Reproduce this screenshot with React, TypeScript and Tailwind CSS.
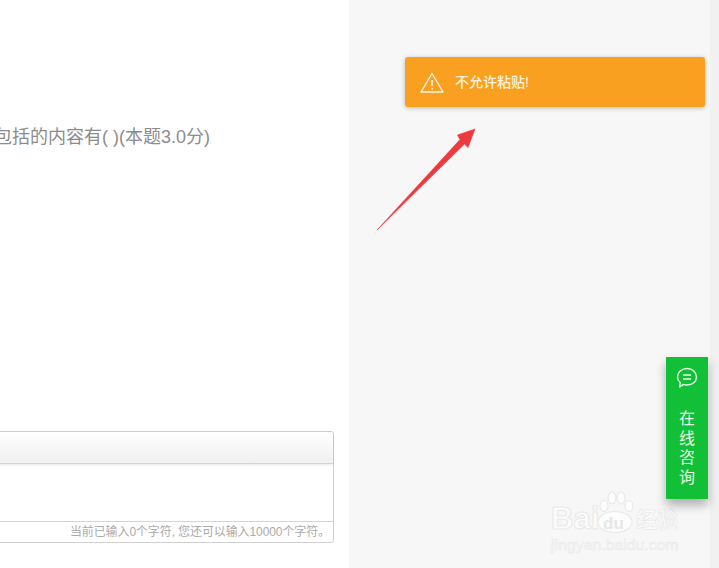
import React from 'react';

const cjk = "font-['Liberation_Sans','Noto_Sans_CJK_SC',sans-serif]";

const Editor: React.FC = () => {
  return (
    <div className="editor ml-[-20px] mr-[15px] mt-auto mb-[25px] flex h-[112px] flex-col rounded-[3px] border border-[#cfcfcf] bg-white">
      <div className="h-[32px] rounded-t-[3px] border-b border-[#d4d4d4] bg-gradient-to-b from-white to-[#f0f0f0] shadow-[0_1px_3px_rgba(0,0,0,0.1)]"></div>
      <div className="flex-1"></div>
      <div className="flex h-[21px] items-center justify-end border-t border-[#d4d4d4] pr-[3px] text-[12px] tracking-[-0.1px] text-[#ababab]">
        当前已输入0个字符, 您还可以输入10000个字符。
      </div>
    </div>
  );
};

const Alert: React.FC = () => {
  return (
    <div className="alert flex h-[50px] w-[300px] items-center rounded-[3px] bg-[#f9a020] pl-[15px] shadow-[0_1px_5px_rgba(0,0,0,0.25)]">
      <svg width="24" height="21" viewBox="0 0 24 21" fill="none" stroke="#fff5e0" strokeWidth="1.4">
        <path d="M12 1.5 L23 20 L1 20 Z" strokeLinejoin="round" />
        <path d="M12 8 L12 14" strokeWidth="1.6" />
        <circle cx="12" cy="16.8" r="1" fill="#fff5e0" stroke="none" />
      </svg>
      <span className="ml-[11px] text-[14px] font-medium text-[#fff3dc]">不允许粘贴!</span>
    </div>
  );
};

const Consult: React.FC = () => {
  return (
    <div className="absolute left-[666px] top-[357px] flex h-[142px] w-[42px] flex-col items-center bg-[#11c037] pt-[10px] text-white shadow-[0_6px_10px_rgba(0,0,0,0.3)]">
      <svg width="22" height="22" viewBox="0 0 22 22" fill="none" stroke="#e8fbe8" strokeWidth="1.4">
        <path d="M11 1.5 C16.5 1.5 20.5 5.2 20.5 10 C20.5 14.8 16.5 18 11 18 C9.6 18 8.4 17.8 7.4 17.4 L3.8 20 L4.2 15.6 C2.4 14 1.5 12.2 1.5 10 C1.5 5.2 5.5 1.5 11 1.5 Z" strokeLinejoin="round" />
        <path d="M7 8 L15 8 M7 12 L15 12" />
      </svg>
      <div className="mt-[20px] flex flex-col items-center text-[16px] leading-[19.7px] text-[#eafbe8]">
        <span>在</span>
        <span>线</span>
        <span>咨</span>
        <span>询</span>
      </div>
    </div>
  );
};

const Watermark: React.FC = () => {
  return (
    <div className="absolute left-[551px] top-[490px] h-[64px] w-[130px] text-white">
      <span className="absolute left-0 top-[12px] font-['Liberation_Sans',sans-serif] text-[31px] leading-[34px] font-bold text-[#fbfbfb] [-webkit-text-stroke:1px_#e9e9e9]">Bai</span>
      <svg className="absolute left-[44px] top-0" width="40" height="44" viewBox="0 0 40 44" fill="#fcfcfc" stroke="#e9e9e9" strokeWidth="1.2">
        <ellipse cx="9" cy="16" rx="4" ry="5.5" />
        <ellipse cx="17" cy="8" rx="4" ry="6" />
        <ellipse cx="26" cy="8" rx="4" ry="6" />
        <ellipse cx="34" cy="16" rx="4" ry="5.5" />
        <ellipse cx="20" cy="32" rx="17" ry="10.5" />
      </svg>
      <span className="absolute left-[52px] top-[24px] font-['Liberation_Sans',sans-serif] text-[17px] leading-[20px] font-bold text-[#e6e6e6]">du</span>
      <span className="absolute left-[85px] top-[18px] text-[21px] leading-[24px] font-bold text-[#fbfbfb] [-webkit-text-stroke:0.6px_#e8e8e8]">经验</span>
      <span className="absolute left-0 top-[46px] font-['Liberation_Sans',sans-serif] text-[15.5px] leading-[18px] tracking-[0.15px] whitespace-nowrap text-[#f5f5f5] [-webkit-text-stroke:0.5px_#e9e9e9]">jingyan.baidu.com</span>
    </div>
  );
};

const Arrow: React.FC = () => {
  return (
    <svg className="absolute left-[370px] top-[125px]" width="110" height="110" viewBox="0 0 110 110">
      <path d="M7 105 L90 14.5 L87.5 10 L105 4 L98 22.5 L94.5 19 Z" fill="#ee3a3f" stroke="#ee3a3f" strokeWidth="0.6" strokeLinejoin="round" />
    </svg>
  );
};

export default function App() {
  return (
    <div className={`relative flex h-[568px] w-[719px] overflow-hidden bg-white ${cjk}`}>
      <div className="flex w-[349px] shrink-0 flex-col overflow-hidden bg-white">
        <p className="ml-[-6px] mt-[125px] whitespace-nowrap text-[18px] leading-[24px] text-[#8c8c8c]">
          包括的内容有( )(本题3.0分)
        </p>
        <Editor />
      </div>
      <div className="flex-1 bg-[#f7f7f7] pl-[56px] pt-[57px]">
        <Alert />
      </div>
      <div className="w-[9px] shrink-0 bg-[#f1f1f1]"></div>
      <Arrow />
      <Watermark />
      <Consult />
    </div>
  );
}
